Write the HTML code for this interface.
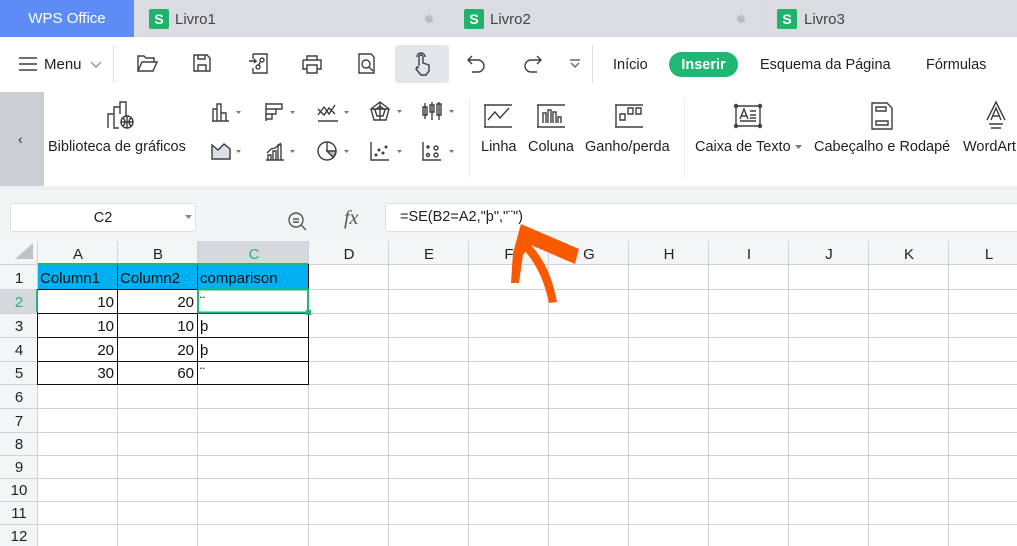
<!DOCTYPE html>
<html><head><meta charset="utf-8"><style>
*{margin:0;padding:0;box-sizing:border-box}
body{width:1017px;height:546px;overflow:hidden;background:#fff;font-family:"Liberation Sans","DejaVu Sans",sans-serif;color:#333;position:relative}
.a{position:absolute;white-space:nowrap}
.tabbar{left:0;top:0;width:1017px;height:37px;background:#dcdde2}
.tab{top:0;height:37px;background:#dbdce1;font-size:15px;color:#444;line-height:39px}
.s{position:absolute;top:9px;width:20px;height:20px;background:#21b36c;border-radius:2px;color:#fff;font-size:14px;font-weight:bold;text-align:center;line-height:20px}
.dot{position:absolute;top:15px;width:8px;height:8px;border-radius:50%;background:#b9bcc6}
.lbl{font-size:14.5px;color:#222}
svg.i{position:absolute;fill:none;stroke:#3b3e45;stroke-width:1.4}
</style></head><body>
<div class="a tabbar"></div>
<div class="a" style="left:0;top:0;width:134px;height:37px;background:#5d8cf6;color:#fff;font-size:15px;line-height:38px;text-align:center">WPS Office</div>
<div class="a tab" style="left:137px;width:313px"><div class="s" style="left:12px">S</div><span style="position:absolute;left:38px">Livro1</span><div class="dot" style="left:288px"></div></div>
<div class="a tab" style="left:452px;width:311px"><div class="s" style="left:12px">S</div><span style="position:absolute;left:38px">Livro2</span><div class="dot" style="left:285px"></div></div>
<div class="a tab" style="left:766px;width:251px"><div class="s" style="left:11px">S</div><span style="position:absolute;left:38px">Livro3</span></div>

<div class="a" style="left:395px;top:45px;width:54px;height:38px;background:#e3e5e9;border-radius:3px"></div>
<svg class="i" style="left:18px;top:56px" width="20" height="16"><path d="M1 2h18M1 8h18M1 14h18"/></svg>
<div class="a" style="left:44px;top:56px;font-size:15px;color:#222">Menu</div>
<svg class="i" style="left:90px;top:61px;stroke:#999" width="12" height="8"><path d="M1 1l5 5 5-5"/></svg>
<div class="a" style="left:113px;top:45px;width:1px;height:38px;background:#e0e0e0"></div>
<svg class="i" style="left:136px;top:53px" width="22" height="20"><path d="M2 18V3h6l2 2h8v4M2 18l4-9h15l-4 9z"/></svg>
<svg class="i" style="left:192px;top:53px" width="20" height="20"><path d="M2 2h13l3 3v13H2zM6 18v-6h8v6M6 2v4h7V2"/></svg>
<svg class="i" style="left:247px;top:52px" width="22" height="22"><path d="M6 2h14v19H6v-5M6 2v5M2 9h7l-2-2M9 9l-2 2"/><circle cx="15" cy="8" r="2"/><circle cx="11" cy="15" r="2"/><path d="M13 10l-1 3"/></svg>
<svg class="i" style="left:301px;top:54px" width="22" height="20"><path d="M6 6V2h10v4M2 6h18v9h-4M6 15H2V6M6 11h10v8H6z"/></svg>
<svg class="i" style="left:356px;top:52px" width="22" height="22"><path d="M3 2h12l3 3v16H3z"/><circle cx="10" cy="12" r="4"/><path d="M13 15l4 4"/></svg>
<svg class="i" style="left:412px;top:52px" width="22" height="24"><path d="M7 14V5a2 2 0 014 0v6l6 2v6l-3 4H9l-5-6 1-2 2 1"/><path d="M5 5a4 4 0 018 0"/></svg>
<svg class="i" style="left:467px;top:55px" width="20" height="18"><path d="M5 1L1 5l4 4M1 5h10a6 6 0 010 12H5"/></svg>
<svg class="i" style="left:522px;top:55px" width="20" height="18"><path d="M15 1l4 4-4 4M19 5H9a6 6 0 000 12h6"/></svg>
<svg class="i" style="left:569px;top:58px;stroke:#666" width="12" height="12"><path d="M1 2h10M2 5l4 4 4-4"/></svg>
<div class="a" style="left:592px;top:45px;width:1px;height:38px;background:#e0e0e0"></div>
<div class="a lbl" style="left:613px;top:57px">Início</div>
<div class="a" style="left:669px;top:52px;width:69px;height:25px;border-radius:13px;background:#20b774;color:#fff;font-weight:bold;font-size:14.5px;text-align:center;line-height:26px">Inserir</div>
<div class="a lbl" style="left:760px;top:57px">Esquema da Página</div>
<div class="a lbl" style="left:926px;top:57px">Fórmulas</div>

<div class="a" style="left:0;top:92px;width:44px;height:94px;background:#cbcdd2"></div>
<div class="a" style="left:18px;top:131px;font-size:14px;color:#333">‹</div>
<div class="a" style="left:0;top:186px;width:1017px;height:4px;background:#eceef1"></div>
<svg class="i" style="left:106px;top:100px" width="30" height="30"><path d="M2 28V14h6v14h5M8 14V7h6v7M14 7V2h6v15"/><circle cx="21" cy="22" r="6"/><path d="M15 22h12M21 16v12M17 18q4 4 0 8M25 18q-4 4 0 8"/></svg>
<div class="a lbl" style="left:48px;top:139px">Biblioteca de gráficos</div>
<svg class="i" style="left:210px;top:101px" width="34" height="22"><path d="M2 20h17M3 20V8h4v12M7 20V3h4v17M11 20v-8h5v8"/><path d="M26 10l2.5 3 2.5-3" fill="#777" stroke="none"/></svg>
<svg class="i" style="left:264px;top:101px" width="34" height="22"><path d="M2 2v18M2 3h16v5H2M2 8h10v5H2M2 13h6v5H2"/><path d="M26 10l2.5 3 2.5-3" fill="#777" stroke="none"/></svg>
<svg class="i" style="left:316px;top:101px" width="34" height="22"><path d="M2 20h20M2 14l6-8 5 7 6-9M2 8l6 6 5-7 6 6"/><path d="M28 10l2.5 3 2.5-3" fill="#777" stroke="none"/></svg>
<svg class="i" style="left:369px;top:100px" width="34" height="22"><path d="M11 2l9 7-3 11H5L2 9zM11 6l5 4-2 6H8l-2-6zM11 2v18M2 9l18 0"/><path d="M28 10l2.5 3 2.5-3" fill="#777" stroke="none"/></svg>
<svg class="i" style="left:421px;top:100px" width="34" height="22"><path d="M4 3v16M2 7h4v8H2zM11 2v18M9 5h4v7H9zM18 2v18M16 4h4v11h-4z"/><path d="M28 10l2.5 3 2.5-3" fill="#777" stroke="none"/></svg>
<svg class="i" style="left:210px;top:140px" width="34" height="22"><path d="M2 19V5l6 5 6-6 6 5v10z" fill="#dde0e5"/><path d="M26 10l2.5 3 2.5-3" fill="#777" stroke="none"/></svg>
<svg class="i" style="left:264px;top:140px" width="34" height="22"><path d="M2 20h18M4 20v-5h3v5M9 20v-9h3v9M14 20V5h3v15M3 13l4-4 4-1 6-5"/><path d="M26 10l2.5 3 2.5-3" fill="#777" stroke="none"/></svg>
<svg class="i" style="left:316px;top:140px" width="34" height="22"><circle cx="11" cy="11" r="9"/><path d="M11 2v9l6 6"/><path d="M11 11l6 6A9 9 0 0020 11z" fill="#bbb"/><path d="M28 10l2.5 3 2.5-3" fill="#777" stroke="none"/></svg>
<svg class="i" style="left:369px;top:140px" width="34" height="22"><path d="M2 2v18h18"/><circle cx="7" cy="15" r=".8"/><circle cx="10" cy="10" r=".8"/><circle cx="14" cy="13" r=".8"/><circle cx="17" cy="7" r=".8"/><path d="M28 10l2.5 3 2.5-3" fill="#777" stroke="none"/></svg>
<svg class="i" style="left:421px;top:140px" width="34" height="22"><path d="M2 2v18h18"/><circle cx="7" cy="15" r="1.5"/><circle cx="7" cy="7" r="1"/><circle cx="15" cy="8" r="2"/><circle cx="15" cy="15" r="2"/><path d="M28 10l2.5 3 2.5-3" fill="#777" stroke="none"/></svg>
<div class="a" style="left:469px;top:98px;width:1px;height:80px;background:#eee"></div>
<svg class="i" style="left:482px;top:103px" width="32" height="26"><path d="M2 2h28M2 24h28M3 2v22M6 17l7-8 5 6 9-10"/></svg>
<div class="a lbl" style="left:481px;top:139px">Linha</div>
<svg class="i" style="left:535px;top:103px" width="32" height="26"><path d="M2 2h28M2 24h28M3 2v22M8 20V10h3v10M13 20V7h3v13M18 20V9h3v11M23 20v-6h3v6"/></svg>
<div class="a lbl" style="left:528px;top:139px">Coluna</div>
<svg class="i" style="left:613px;top:103px" width="32" height="26"><path d="M2 2h28M2 24h28M3 2v22M7 11h5v6H7zM15 5h5v6h-5zM23 5h5v6h-5z"/></svg>
<div class="a lbl" style="left:585px;top:139px">Ganho/perda</div>
<div class="a" style="left:684px;top:98px;width:1px;height:80px;background:#eee"></div>
<svg class="i" style="left:733px;top:103px" width="30" height="26"><path d="M3 3h24v20H3z"/><circle cx="3" cy="3" r="1.5"/><circle cx="27" cy="3" r="1.5"/><circle cx="3" cy="23" r="1.5"/><circle cx="27" cy="23" r="1.5"/><path d="M7 16l4-10 4 10M8 13h6M7 18h16M17 8h6M17 12h6M17 15h6"/></svg>
<div class="a lbl" style="left:695px;top:139px">Caixa de Texto</div>
<svg class="a" style="left:795px;top:144px" width="8" height="6"><path d="M0 1h7L3.5 5z" fill="#777"/></svg>
<svg class="i" style="left:870px;top:101px" width="24" height="30"><path d="M2 2h15l5 5v21H2z"/><path d="M6 6h10v4H6zM6 20h12v4H6z"/></svg>
<div class="a lbl" style="left:814px;top:139px">Cabeçalho e Rodapé</div>
<svg class="i" style="left:983px;top:100px" width="26" height="32"><path d="M4 20L13 2l9 18M8 20l5-12 5 12M6 24h14M8 28h10M9 16h8"/></svg>
<div class="a lbl" style="left:963px;top:139px">WordArt</div>

<div class="a" style="left:0;top:190px;width:1017px;height:51px;background:#f3f4f6"></div>
<div class="a" style="left:10px;top:203px;width:186px;height:29px;background:#fff;border:1px solid #dcdfe4;border-radius:3px;font-size:14.5px;text-align:center;line-height:28px;color:#222">C2</div>
<svg class="a" style="left:185px;top:215px" width="8" height="5"><path d="M0 0h7L3.5 4z" fill="#888"/></svg>
<svg class="i" style="left:287px;top:211px;stroke:#555" width="22" height="22"><circle cx="9" cy="9" r="7"/><path d="M14 14l5 5M6 8h6M6 11h6"/></svg>
<div class="a" style="left:344px;top:207px;font-family:'Liberation Serif',serif;font-style:italic;font-size:20px;color:#555">fx</div>
<div class="a" style="left:385px;top:203px;width:640px;height:29px;background:#fff;border:1px solid #dcdfe4;border-radius:3px"></div>
<div class="a" style="left:400px;top:209px;font-size:14.5px;color:#222">=SE(B2=A2,"þ","¨")</div>

<svg class="a" style="left:0;top:0" width="1017" height="546" font-family="Liberation Sans, sans-serif" font-size="15">
<rect x="0" y="241" width="1017" height="305" fill="#fff"/>
<rect x="0" y="241" width="1017" height="23" fill="#f4f5f7"/>
<rect x="0" y="241" width="37" height="305" fill="#f4f5f7"/>
<rect x="197" y="241" width="111" height="23" fill="#d6d8de"/>
<rect x="0" y="289" width="37" height="24" fill="#d6d8de"/>
<path d="M15 259h18V243z" fill="#bfc2c9"/>
<rect x="37" y="264" width="271" height="25" fill="#00b0f0"/>
<g stroke="#cdd2dd" stroke-width="1">
<path d="M37.5 241v305M117.5 241v305M197.5 241v305M308.5 241v305M388.5 241v305M468.5 241v305M548.5 241v305M628.5 241v305M708.5 241v305M788.5 241v305M868.5 241v305M948.5 241v305"/>
<path d="M0 264.5h1017M0 289.5h1017M0 313.5h1017M0 337.5h1017M0 361.5h1017M0 384.5h1017M0 408.5h1017M0 432.5h1017M0 455.5h1017M0 478.5h1017M0 501.5h1017M0 524.5h1017"/>
</g>
<g stroke="#111" stroke-width="1" fill="none">
<path d="M37.5 289v95.5M117.5 264v120.5M197.5 264v120.5M308.5 264v120.5M37 289.5h271M37 313.5h271M37 337.5h271M37 361.5h271M37 384.5h272"/>
</g>
<path d="M38 264h270" stroke="#20b774" stroke-width="2"/>
<rect x="198" y="289.5" width="110" height="23" fill="none" stroke="#20b774" stroke-width="2"/>
<rect x="306" y="310" width="5" height="5" fill="#20b774"/>
<path d="M37 290v22" stroke="#20b774" stroke-width="2"/>
<g fill="#222" text-anchor="middle">
<text x="78" y="259">A</text><text x="158" y="259">B</text><text x="254" y="259" fill="#20b774">C</text><text x="349" y="259">D</text><text x="429" y="259">E</text><text x="509" y="259">F</text><text x="589" y="259">G</text><text x="669" y="259">H</text><text x="749" y="259">I</text><text x="829" y="259">J</text><text x="909" y="259">K</text><text x="989" y="259">L</text>
<text x="19" y="283">1</text><text x="19" y="307" fill="#20b774">2</text><text x="19" y="331">3</text><text x="19" y="355">4</text><text x="19" y="378">5</text><text x="19" y="402">6</text><text x="19" y="426">7</text><text x="19" y="449">8</text><text x="19" y="472">9</text><text x="19" y="495">10</text><text x="19" y="518">11</text><text x="19" y="541">12</text>
</g>
<g fill="#111">
<text x="40" y="283">Column1</text><text x="120" y="283">Column2</text><text x="200" y="283">comparison</text>
<g text-anchor="end"><text x="114" y="307">10</text><text x="194" y="307">20</text><text x="114" y="331">10</text><text x="194" y="331">10</text><text x="114" y="355">20</text><text x="194" y="355">20</text><text x="114" y="378">30</text><text x="194" y="378">60</text></g>
<text x="200" y="307">¨</text><text x="200" y="331">þ</text><text x="200" y="355">þ</text><text x="200" y="378">¨</text>
</g>
<g fill="#f75a00">
<path d="M521 224l58 25-4 15-44-19-8 10-4 28-8 0 2-30z"/>
<path d="M527 241q23 22 30 61l-8 1q-7-34-26-54z"/>
</g>
</svg>
</body></html>
